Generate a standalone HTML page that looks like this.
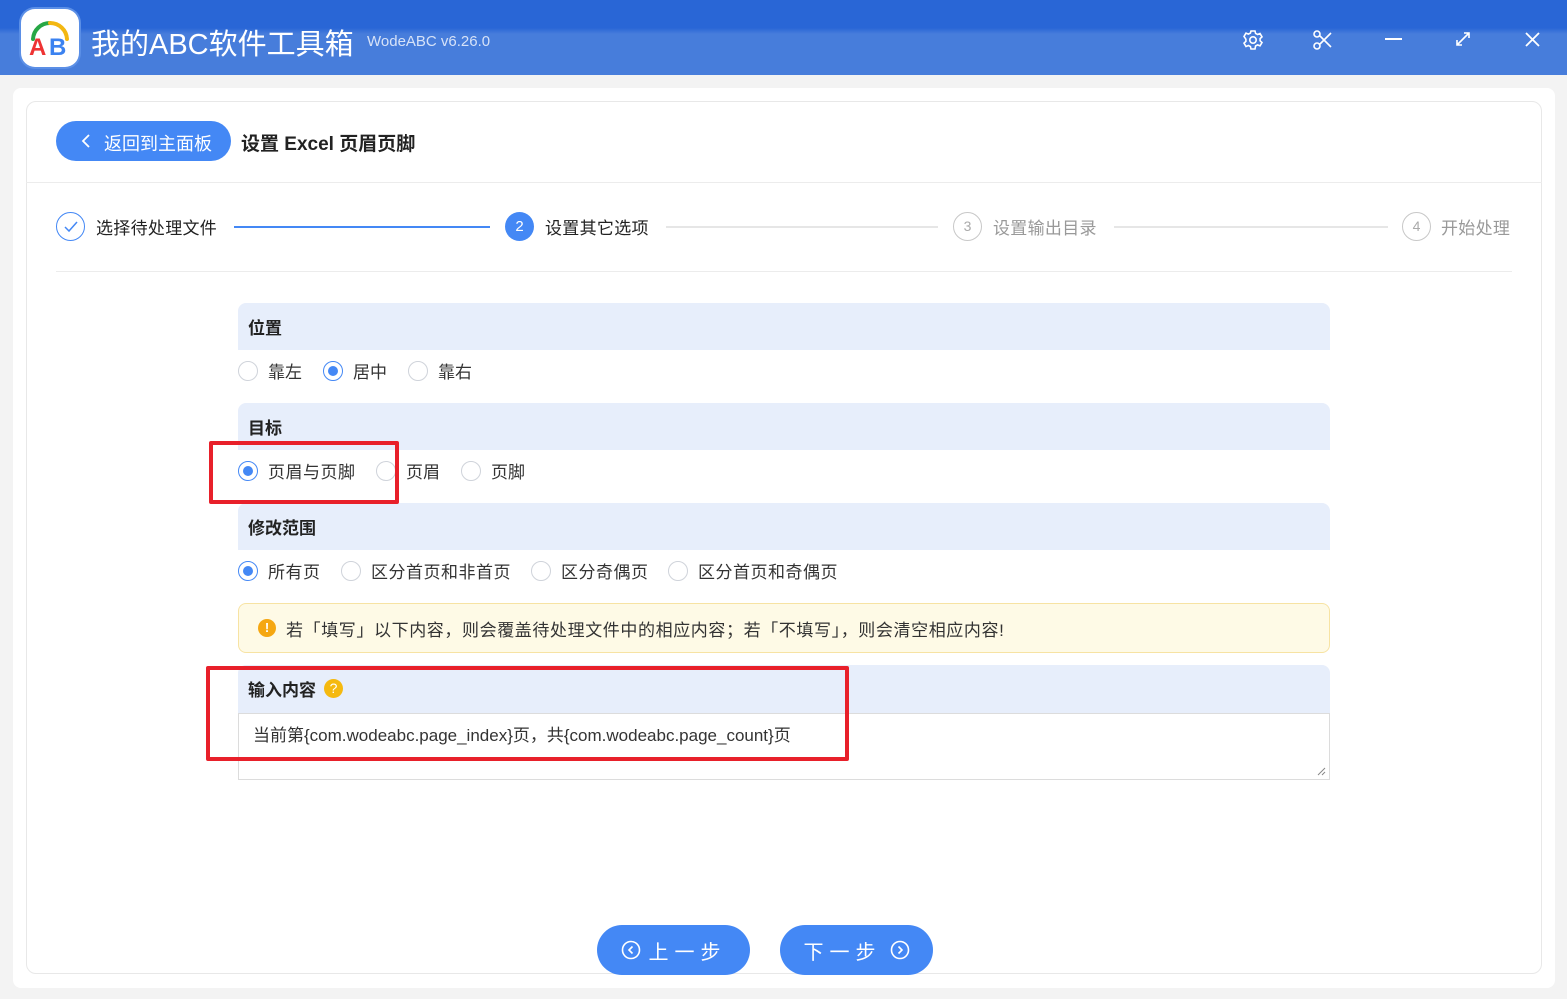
<!DOCTYPE html>
<html><head><meta charset="utf-8"><style>
*{box-sizing:border-box;margin:0;padding:0}
body{width:1567px;height:999px;background:#f3f3f3;font-family:"Liberation Sans","Noto Sans CJK SC",sans-serif;position:relative;overflow:hidden;color:#222}
.abs{position:absolute}
.top{left:0;top:0;width:1567px;height:75px;background:linear-gradient(180deg,#2966d6 0,#2966d6 28px,#477ddb 34px,#477ddb 100%)}
.band{left:238px;width:1092px;height:47px;background:#e7eefb;border-radius:8px 8px 0 0;font-size:17px;font-weight:bold;padding:11px 0 0 10px;color:#222}
.radio{width:20px;height:20px;border:1px solid #cfd3da;border-radius:50%;background:#fff}
.radio.on{border-color:#4488f5}
.radio.on::after{content:"";position:absolute;left:4px;top:4px;width:10px;height:10px;border-radius:50%;background:#4488f5}
.lbl{font-size:17px;color:#333}
.step{font-size:17px}
.btn{height:50px;border-radius:25px;background:#4488f5;color:#fff;font-size:20px;top:925px;display:flex;align-items:center;justify-content:center;gap:8px;letter-spacing:6px}
</style></head><body>
<div class="abs top"></div>
<div class="abs" style="left:21px;top:9px;width:58px;height:58px;border-radius:14px;background:#fff;box-shadow:0 0 0 2px #5b8fe6">
<svg width="58" height="58" viewBox="0 0 58 58"><path d="M12 30 A17 17 0 0 1 29 14" stroke="#27a745" stroke-width="4" fill="none" stroke-linecap="round"/><path d="M29 14 A17 17 0 0 1 46 30" stroke="#f3b711" stroke-width="4" fill="none" stroke-linecap="round"/><text x="8" y="46" font-family="Liberation Sans" font-size="24" fill="#e33" font-weight="bold">A</text><text x="28" y="46" font-family="Liberation Sans" font-size="24" fill="#3b82f0" font-weight="bold">B</text></svg></div>
<div class="abs" style="left:91px;top:21px;color:#fff;font-size:29px">我的ABC软件工具箱</div>
<div class="abs" style="left:367px;top:33px;color:#d6e2f8;font-size:15px">WodeABC v6.26.0</div>
<svg class="abs" style="left:1241px;top:28px" width="24" height="24" viewBox="0 0 24 24" fill="none" stroke="#fff" stroke-width="1.6"><path d="M10 3h4l.6 2.5 2 1 2.4-1 2 3.4-1.9 1.7v2.2l1.9 1.7-2 3.4-2.4-1-2 1L14 21h-4l-.6-2.5-2-1-2.4 1-2-3.4 1.9-1.7v-2.2L3 8.5l2-3.4 2.4 1 2-1z"/><circle cx="12" cy="12" r="3.2"/></svg>
<svg class="abs" style="left:1312px;top:29px" width="22" height="22" viewBox="0 0 22 22" fill="none" stroke="#fff" stroke-width="1.6"><circle cx="5" cy="5" r="3"/><circle cx="5" cy="17" r="3"/><path d="M7.5 6.5L19 18M7.5 15.5L19 4"/></svg>
<div class="abs" style="left:1385px;top:38px;width:17px;height:2px;background:#fff"></div>
<svg class="abs" style="left:1454px;top:30px" width="18" height="18" viewBox="0 0 18 18" fill="none" stroke="#fff" stroke-width="1.6"><path d="M3 15L15 3M10 3h5v5M3 10v5h5"/></svg>
<svg class="abs" style="left:1524px;top:31px" width="17" height="17" viewBox="0 0 17 17" stroke="#fff" stroke-width="1.8"><path d="M2 2L15 15M15 2L2 15"/></svg>
<div class="abs" style="left:13px;top:88px;width:1542px;height:900px;background:#fff;border-radius:8px"></div>
<div class="abs" style="left:26px;top:101px;width:1516px;height:873px;border:1px solid #e8e8e8;border-radius:10px"></div>
<div class="abs" style="left:26px;top:182px;width:1516px;height:1px;background:#ececec"></div>
<div class="abs" style="left:56px;top:121px;width:175px;height:40px;border-radius:20px;background:#4488f5;color:#fff;font-size:18px;padding:9px 0 0 48px">返回到主面板</div>
<svg class="abs" style="left:79px;top:133px" width="14" height="16" viewBox="0 0 14 16" fill="none" stroke="#fff" stroke-width="1.8"><path d="M10 2L4 8l6 6"/></svg>
<div class="abs" style="left:241px;top:129px;font-size:19px;font-weight:bold;color:#222">设置 Excel 页眉页脚</div>
<div class="abs" style="left:56px;top:212px;width:29px;height:29px;border:1px solid #4488f5;border-radius:50%"></div>
<svg class="abs" style="left:62px;top:219px" width="18" height="16" viewBox="0 0 18 16" fill="none" stroke="#4488f5" stroke-width="1.5"><path d="M3 8l4 4 8-9"/></svg>
<div class="abs step" style="left:96px;top:214px;letter-spacing:.3px">选择待处理文件</div>
<div class="abs" style="left:234px;top:226px;width:256px;height:2px;background:#4488f5"></div>
<div class="abs" style="left:505px;top:212px;width:29px;height:29px;border-radius:50%;background:#4488f5;color:#fff;font-size:15px;text-align:center;line-height:29px">2</div>
<div class="abs step" style="left:545px;top:214px;letter-spacing:.3px">设置其它选项</div>
<div class="abs" style="left:666px;top:226px;width:272px;height:2px;background:#e6e6e6"></div>
<div class="abs" style="left:953px;top:212px;width:29px;height:29px;border-radius:50%;border:1px solid #c8c8c8;color:#aaa;font-size:14px;text-align:center;line-height:27px">3</div>
<div class="abs step" style="left:993px;top:214px;color:#999;letter-spacing:.3px">设置输出目录</div>
<div class="abs" style="left:1114px;top:226px;width:274px;height:2px;background:#e6e6e6"></div>
<div class="abs" style="left:1402px;top:212px;width:29px;height:29px;border-radius:50%;border:1px solid #c8c8c8;color:#aaa;font-size:14px;text-align:center;line-height:27px">4</div>
<div class="abs step" style="left:1441px;top:214px;color:#999;letter-spacing:.3px">开始处理</div>
<div class="abs" style="left:56px;top:271px;width:1456px;height:1px;background:#ececec"></div>

<div class="abs band" style="top:303px">位置</div>
<div class="abs radio" style="left:238px;top:361px"></div><div class="abs lbl" style="left:268px;top:358px">靠左</div>
<div class="abs radio on" style="left:323px;top:361px"></div><div class="abs lbl" style="left:353px;top:358px">居中</div>
<div class="abs radio" style="left:408px;top:361px"></div><div class="abs lbl" style="left:438px;top:358px">靠右</div>

<div class="abs band" style="top:403px">目标</div>
<div class="abs radio on" style="left:238px;top:461px"></div><div class="abs lbl" style="left:268px;top:458px;letter-spacing:.5px">页眉与页脚</div>
<div class="abs radio" style="left:376px;top:461px"></div><div class="abs lbl" style="left:406px;top:458px">页眉</div>
<div class="abs radio" style="left:461px;top:461px"></div><div class="abs lbl" style="left:491px;top:458px">页脚</div>

<div class="abs band" style="top:503px">修改范围</div>
<div class="abs radio on" style="left:238px;top:561px"></div><div class="abs lbl" style="left:268px;top:558px;letter-spacing:.5px">所有页</div>
<div class="abs radio" style="left:341px;top:561px"></div><div class="abs lbl" style="left:371px;top:558px;letter-spacing:.5px">区分首页和非首页</div>
<div class="abs radio" style="left:531px;top:561px"></div><div class="abs lbl" style="left:561px;top:558px;letter-spacing:.5px">区分奇偶页</div>
<div class="abs radio" style="left:668px;top:561px"></div><div class="abs lbl" style="left:698px;top:558px;letter-spacing:.5px">区分首页和奇偶页</div>

<div class="abs" style="left:238px;top:603px;width:1092px;height:50px;background:#fefae6;border:1px solid #f7e3a3;border-radius:8px"></div>
<div class="abs" style="left:258px;top:619px;width:18px;height:18px;border-radius:50%;background:#f5a712;color:#fff;font-size:13px;font-weight:bold;text-align:center;line-height:18px">!</div>
<div class="abs lbl" style="left:286px;top:616px;color:#333;letter-spacing:.6px">若「填写」以下内容，则会覆盖待处理文件中的相应内容；若「不填写」，则会清空相应内容!</div>

<div class="abs band" style="top:665px;height:48px">输入内容</div>
<div class="abs" style="left:324px;top:679px;width:19px;height:19px;border-radius:50%;background:#f5b90f;color:#fff;font-size:14px;text-align:center;line-height:19px">?</div>
<div class="abs" style="left:238px;top:713px;width:1092px;height:67px;border:1px solid #dcdcdc;background:#fff"></div>
<div class="abs lbl" style="left:253px;top:721px;color:#333">当前第{com.wodeabc.page_index}页，共{com.wodeabc.page_count}页</div>
<svg class="abs" style="left:1316px;top:766px" width="10" height="10" viewBox="0 0 10 10" stroke="#888" stroke-width="1"><path d="M9 2L2 9M9 6L6 9"/></svg>

<div class="abs" style="left:209px;top:441px;width:190px;height:63px;border:4px solid #e8202a;border-radius:2px"></div>
<div class="abs" style="left:206px;top:666px;width:643px;height:95px;border:4px solid #e8202a;border-radius:2px"></div>

<div class="abs btn" style="left:597px;width:153px"><svg width="20" height="20" viewBox="0 0 20 20" fill="none" stroke="#fff" stroke-width="1.6"><circle cx="10" cy="10" r="8.5"/><path d="M11.5 6.5L8 10l3.5 3.5"/></svg>上一步</div>
<div class="abs btn" style="left:780px;width:153px">下一步<svg width="20" height="20" viewBox="0 0 20 20" fill="none" stroke="#fff" stroke-width="1.6"><circle cx="10" cy="10" r="8.5"/><path d="M8.5 6.5L12 10l-3.5 3.5"/></svg></div>
</body></html>
